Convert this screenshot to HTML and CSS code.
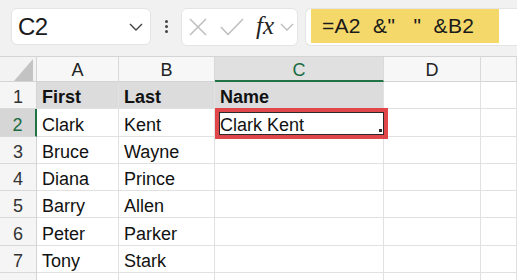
FILE: index.html
```html
<!DOCTYPE html>
<html lang="en">
<head>
    <meta charset="UTF-8">
    <title>Concatenate names</title>
    <link rel="stylesheet" href="styles.css">
</head>
<body>
    <div class="toolbar">
        <div class="namebox">
            <span class="ref">C2</span>
            <svg class="chev" width="14" height="8" viewBox="0 0 14 8"><polyline points="1,1 7,7 13,1" fill="none" stroke="#444" stroke-width="1.4"/></svg>
        </div>
        <div class="dots"><i></i><i></i><i></i></div>
        <div class="fbtns">
            <svg width="18" height="18" viewBox="0 0 18 18"><path d="M1 1 L17 17 M17 1 L1 17" stroke="#bdbdbd" stroke-width="1.5" fill="none"/></svg>
            <svg class="ok" width="24" height="18" viewBox="0 0 24 18"><polyline points="1,9 8,16.5 23,1" fill="none" stroke="#bdbdbd" stroke-width="1.5"/></svg>
            <span class="fx">fx</span>
            <svg class="fxchev" width="14" height="8" viewBox="0 0 14 8"><polyline points="1,1 7,7 13,1" fill="none" stroke="#bbb" stroke-width="1.3"/></svg>
        </div>
        <div class="formula">
            <span class="hl">=A2  &amp;"   "  &amp;B2</span>
        </div>
    </div>

    <div class="sheet">
        <div class="corner"><svg width="19" height="22" viewBox="0 0 19 22"><polygon points="19,0 19,22 0,22" fill="#c3c3c3"/></svg></div>
        <div class="colhead">A</div>
        <div class="colhead">B</div>
        <div class="colhead sel">C</div>
        <div class="colhead">D</div>
        <div class="colhead"></div>

        <div class="rowhead">1</div>
        <div class="cell head">First</div>
        <div class="cell head">Last</div>
        <div class="cell head">Name</div>
        <div class="cell"></div>
        <div class="cell"></div>

        <div class="rowhead sel">2</div>
        <div class="cell">Clark</div>
        <div class="cell">Kent</div>
        <div class="cell active">Clark Kent<span class="mark"></span></div>
        <div class="cell"></div>
        <div class="cell"></div>

        <div class="rowhead">3</div>
        <div class="cell">Bruce</div>
        <div class="cell">Wayne</div>
        <div class="cell"></div>
        <div class="cell"></div>
        <div class="cell"></div>

        <div class="rowhead">4</div>
        <div class="cell">Diana</div>
        <div class="cell">Prince</div>
        <div class="cell"></div>
        <div class="cell"></div>
        <div class="cell"></div>

        <div class="rowhead">5</div>
        <div class="cell">Barry</div>
        <div class="cell">Allen</div>
        <div class="cell"></div>
        <div class="cell"></div>
        <div class="cell"></div>

        <div class="rowhead">6</div>
        <div class="cell">Peter</div>
        <div class="cell">Parker</div>
        <div class="cell"></div>
        <div class="cell"></div>
        <div class="cell"></div>

        <div class="rowhead">7</div>
        <div class="cell">Tony</div>
        <div class="cell">Stark</div>
        <div class="cell"></div>
        <div class="cell"></div>
        <div class="cell"></div>

        <div class="rowhead"></div>
        <div class="cell"></div>
        <div class="cell"></div>
        <div class="cell"></div>
        <div class="cell"></div>
        <div class="cell"></div>
    </div>
</body>
</html>
```

FILE: styles.css
```css
*, *::before, *::after{
    padding: 0;
    margin: 0;
    box-sizing: border-box;
}
body{
    background-color: #fff;
    font-family: "Liberation Sans", Arial, sans-serif;
    color: #111;
    overflow: hidden;
}

/* top bar: name box + formula bar */
.toolbar{
    display: flex;
    height: 56px;
    padding: 8px 0 10px 11px;
    background-color: #f1f1f1;
}
.namebox{
    width: 140px;
    height: 37px;
    display: flex;
    align-items: center;
    padding: 0 7px 0 6px;
    background-color: #fff;
    border: 1px solid #e4e4e4;
    border-radius: 6px;
}
.namebox .ref{
    flex: 1;
    font-size: 24px;
    letter-spacing: -0.5px;
    color: #1a1a1a;
    padding-top: 1px;
}
.dots{
    width: 30px;
    display: flex;
    flex-direction: column;
    align-items: center;
    justify-content: center;
    gap: 2px;
    padding-bottom: 2px;
}
.dots i{
    width: 3px;
    height: 3px;
    border-radius: 50%;
    background-color: #444;
}
.fbtns{
    width: 117px;
    height: 38px;
    display: flex;
    align-items: center;
    padding-left: 7px;
    background-color: #fff;
    border: 1px solid #e4e4e4;
    border-radius: 6px;
}
.fbtns .ok{
    margin-left: 13px;
}
.fbtns .fx{
    margin-left: 12px;
    font-family: "Liberation Serif", "Times New Roman", serif;
    font-style: italic;
    font-size: 25px;
    color: #222;
    line-height: 1;
    padding-bottom: 3px;
}
.fbtns .fxchev{
    margin-left: 6px;
}
.formula{
    flex: 1;
    height: 38px;
    margin-left: 7px;
    padding-left: 5px;
    background-color: #fff;
    border: 1px solid #e4e4e4;
    border-right: none;
    border-radius: 6px 0 0 6px;
}
.formula .hl{
    display: block;
    width: 188px;
    height: 34px;
    padding-left: 11px;
    background-color: #f4d869;
    font-size: 21px;
    line-height: 34px;
    letter-spacing: 0.3px;
    white-space: pre;
    color: #1a1a1a;
}

/* worksheet grid */
.sheet{
    display: grid;
    grid-template-columns: 37px 82px 96px 169px 97px 36px;
    grid-template-rows: 26px 27px 28px 27px 27px 27px 28px 27px 20px;
    font-size: 18px;
}
.corner{
    display: flex;
    align-items: flex-end;
    justify-content: flex-end;
    padding: 0 3px 0 0;
    background-color: #f3f3f3;
    border-top: 1px solid #d4d4d4;
    border-right: 1px solid #d4d4d4;
    border-bottom: 1px solid #d4d4d4;
}
.colhead{
    display: flex;
    justify-content: center;
    align-items: center;
    padding-top: 3px;
    background-color: #f7f7f7;
    border-top: 1px solid #d4d4d4;
    border-right: 1px solid #d9d9d9;
    border-bottom: 1px solid #d4d4d4;
    color: #222;
}
.colhead.sel{
    background-color: #e0e0e0;
    border-bottom: 2px solid #217346;
    color: #1b6b40;
}
.rowhead{
    display: flex;
    justify-content: center;
    align-items: flex-end;
    padding-bottom: 1px;
    line-height: 20px;
    background-color: #f5f5f5;
    border-right: 1px solid #d4d4d4;
    border-bottom: 1px solid #d9d9d9;
    color: #333;
}
.rowhead.sel{
    background-color: #d6d6d6;
    border-right: 2px solid #217346;
    color: #1b6b40;
}
.cell{
    display: flex;
    align-items: flex-end;
    padding: 0 0 1px 5px;
    line-height: 20px;
    border-right: 1px solid #e1e1e1;
    border-bottom: 1px solid #e1e1e1;
    white-space: nowrap;
}
.cell.head{
    background-color: #dcdcdc;
    font-weight: bold;
}
.cell.active{
    position: relative;
}
/* red highlight round the selected cell */
.cell.active::after{
    content: "";
    position: absolute;
    left: 0;
    top: -1px;
    width: 173px;
    height: 31px;
    border: 4px solid #e0474b;
    box-shadow: inset 0 0 0 1px #2a2a2a;
}
.cell.active .mark{
    position: absolute;
    right: 1px;
    bottom: 4px;
    width: 3px;
    height: 3px;
    background-color: #2a2a2a;
}
```
